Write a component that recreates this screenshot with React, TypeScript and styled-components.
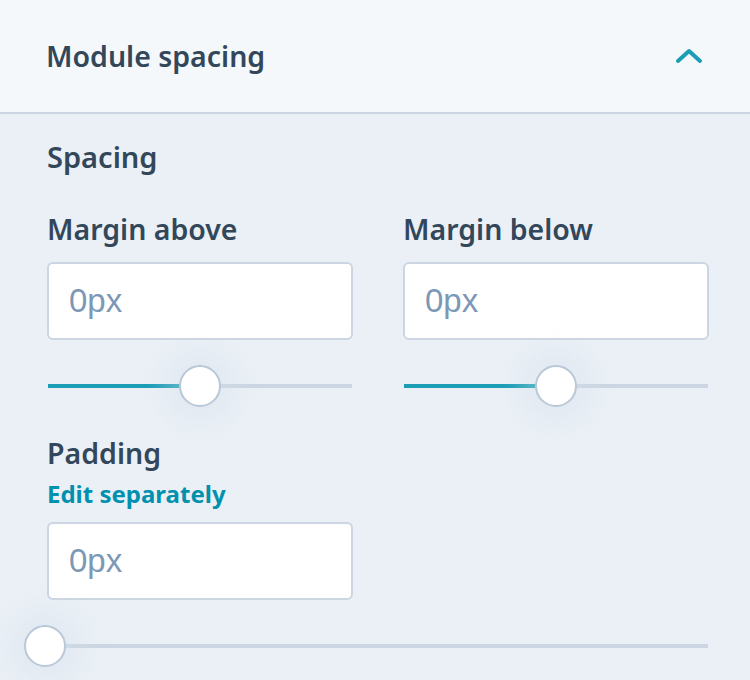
import styled, { createGlobalStyle } from "styled-components";

const GlobalStyle = createGlobalStyle`
  html, body {
    margin: 0;
    padding: 0;
    background-color: #eaf0f6;
  }
  body {
    font-family: "Noto Sans", "Liberation Sans", sans-serif;
    color: #33475b;
  }
`;

const Panel = styled.section`
  width: 750px;
  height: 680px;
  overflow: hidden;
  background-color: #eaf0f6;
`;

const Header = styled.header`
  height: 112px;
  display: flex;
  align-items: center;
  justify-content: space-between;
  padding: 0 47px 0 46px;
  background-color: #f5f8fa;
  border-bottom: 2px solid #cbd6e2;
`;

const Title = styled.h2`
  margin: 0;
  font-size: 28.5px;
  font-weight: 600;
  line-height: 32px;
  color: #33475b;
`;

const Chevron = styled.svg`
  width: 28px;
  height: 18px;
  display: block;
`;

const Body = styled.div`
  padding: 27px 41px 0 47px;
`;

const SectionTitle = styled.h3`
  margin: 0;
  font-size: 29px;
  font-weight: 600;
  line-height: 32px;
  color: #33475b;
`;

const Grid = styled.div`
  display: grid;
  grid-template-columns: 306px 306px;
  column-gap: 50px;
  margin-top: 40px;
`;

const Field = styled.div`
  display: flex;
  flex-direction: column;
`;

const Label = styled.label<{ $gap?: number }>`
  font-size: 28.5px;
  font-weight: 600;
  line-height: 32px;
  color: #33475b;
  margin-bottom: ${({ $gap }) => $gap ?? 17}px;
`;

const LinkButton = styled.button`
  align-self: flex-start;
  padding: 0;
  margin: 10px 0 13px;
  border: none;
  background: none;
  font-family: "Noto Sans", "Liberation Sans", sans-serif;
  font-size: 24px;
  font-weight: 700;
  line-height: 30px;
  color: #0091ae;
  cursor: pointer;
`;

const Input = styled.input`
  box-sizing: border-box;
  width: 306px;
  height: 78px;
  padding: 0 20px;
  border: 2px solid #cbd6e2;
  border-radius: 6px;
  background-color: #ffffff;
  font-family: "Liberation Sans", "Noto Sans", sans-serif;
  font-size: 33px;
  color: #33475b;
  outline: none;

  &::placeholder {
    color: #7c98b6;
  }
`;

const SliderWrap = styled.div<{ $wide?: boolean }>`
  position: relative;
  height: 46px;
  margin-top: 23px;
  margin-left: ${({ $wide }) => ($wide ? "-2px" : "1px")};
  width: ${({ $wide }) => ($wide ? "663px" : "304px")};
`;

const Track = styled.div`
  position: absolute;
  left: 0;
  right: 0;
  top: 21px;
  height: 4px;
  background-color: #cbd6e2;
`;

const Fill = styled.div`
  position: absolute;
  left: 0;
  top: 21px;
  height: 4px;
  background-color: #1a9db5;
`;

const Thumb = styled.div`
  position: absolute;
  top: 2px;
  width: 42px;
  height: 42px;
  margin-left: -21px;
  box-sizing: border-box;
  border-radius: 50%;
  border: 2px solid #b9c8d8;
  background-color: #ffffff;
  box-shadow: 0 0 22px 16px rgba(214, 224, 236, 0.35);
`;

const Slider = ({ value, wide }: { value: number; wide?: boolean }) => (
  <SliderWrap $wide={wide}>
    <Track />
    <Fill style={{ width: `${value}%` }} />
    <Thumb style={{ left: `${value}%` }} />
  </SliderWrap>
);

const PaddingBlock = styled.div`
  display: flex;
  flex-direction: column;
  margin-top: 28px;
`;

const App = () => {
  return (
    <>
      <GlobalStyle />
      <Panel>
        <Header>
          <Title>Module spacing</Title>
          <Chevron viewBox="0 0 28 18" fill="none">
            <path
              d="M3 14 L14 4 L25 14"
              stroke="#1a9db5"
              strokeWidth="4"
              strokeLinecap="round"
              strokeLinejoin="round"
            />
          </Chevron>
        </Header>
        <Body>
          <SectionTitle>Spacing</SectionTitle>
          <Grid>
            <Field>
              <Label>Margin above</Label>
              <Input placeholder="0px" />
              <Slider value={50} />
            </Field>
            <Field>
              <Label>Margin below</Label>
              <Input placeholder="0px" />
              <Slider value={50} />
            </Field>
          </Grid>
          <PaddingBlock>
            <Label $gap={0}>Padding</Label>
            <LinkButton>Edit separately</LinkButton>
            <Input placeholder="0px" />
            <Slider value={0} wide />
          </PaddingBlock>
        </Body>
      </Panel>
    </>
  );
};

export default App;
